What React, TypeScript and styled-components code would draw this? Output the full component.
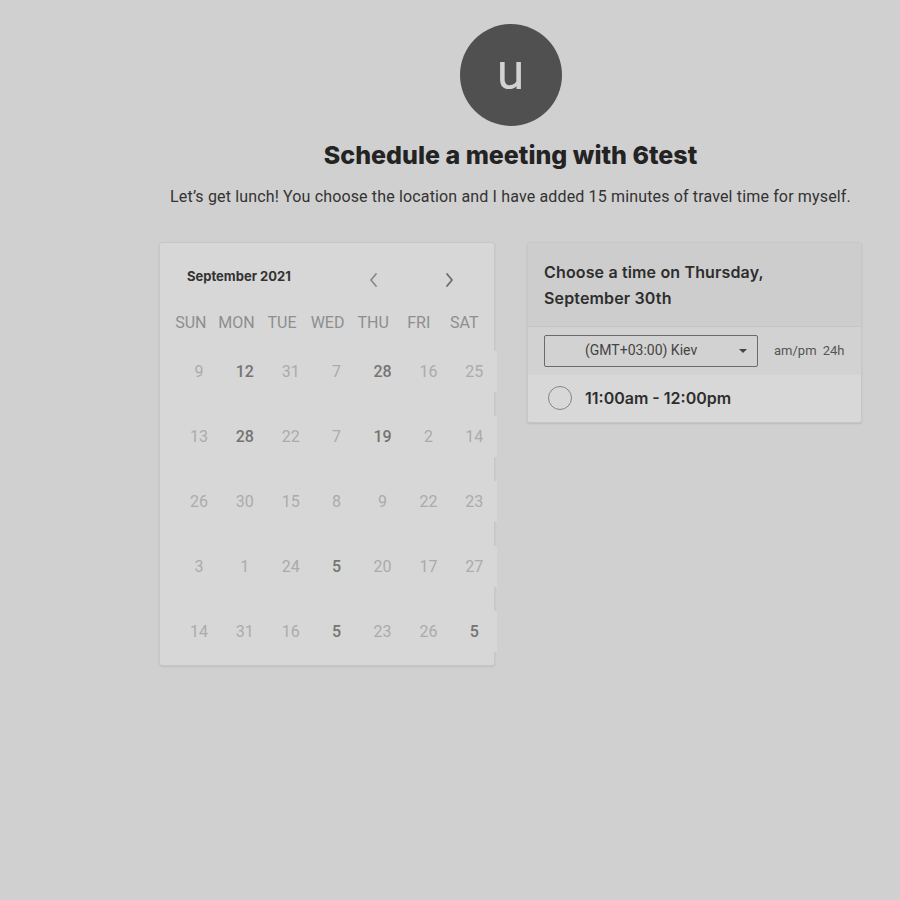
import React from "react";
import styled, { createGlobalStyle } from "styled-components";

const Global = createGlobalStyle`
  html, body { margin: 0; padding: 0; background: #d0d0d0; }
  body { font-family: Roboto, "Liberation Sans", sans-serif; }
  * { box-sizing: border-box; }
`;

const Page = styled.div`
  width: 900px;
  min-height: 900px;
  background: #d0d0d0;
  padding-top: 24px;
`;

const Column = styled.div`
  margin-left: 159px;
  width: 703px;
  display: flex;
  flex-direction: column;
  align-items: center;
`;

const Avatar = styled.div`
  width: 102px;
  height: 102px;
  border-radius: 50%;
  background: #505050;
  color: #d2d2d2;
  display: flex;
  align-items: center;
  justify-content: center;
  font-family: Roboto, "Liberation Sans", sans-serif;
  font-size: 50px;
  line-height: 1;
  padding-bottom: 6px;
`;

const Title = styled.h1`
  margin: 13px 0 0;
  font-family: Inter, "Liberation Sans", sans-serif;
  font-weight: 800;
  font-size: 25px;
  line-height: 32px;
  color: #232323;
  letter-spacing: 0;
`;

const Desc = styled.p`
  margin: 14px 0 0;
  font-family: Roboto, "Liberation Sans", sans-serif;
  font-size: 16px;
  line-height: 24px;
  color: #333;
  letter-spacing: 0.15px;
`;

const Cards = styled.div`
  margin-top: 33px;
  width: 100%;
  display: flex;
  gap: 32px;
  align-items: flex-start;
`;

const CalendarCard = styled.div`
  width: 336px;
  height: 424px;
  background: #d7d7d7;
  border: 1px solid #c6c6c6;
  border-radius: 3px;
  box-shadow: 0 1px 2px rgba(0, 0, 0, 0.08);
  padding: 15px 0 0;
`;

const CalHeader = styled.div`
  display: flex;
  align-items: center;
  height: 36px;
  padding-left: 27px;
`;

const Month = styled.div`
  flex: 0 0 179px;
  font-family: Inter, "Liberation Sans", sans-serif;
  font-weight: 700;
  font-size: 13px;
  color: #333;
`;

const NavBtn = styled.button<{ $gap: number }>`
  flex: 0 0 16px;
  height: 30px;
  border: none;
  background: transparent;
  padding: 0;
  margin-left: ${(p) => p.$gap}px;
  display: flex;
  align-items: center;
  justify-content: center;
  margin-top: 8px;
`;

const DayHeads = styled.div`
  display: grid;
  grid-template-columns: repeat(7, 45.6px);
  margin-top: 16px;
  margin-left: 8px;
  height: 24px;
  align-items: center;
`;

const DayHead = styled.div`
  text-align: center;
  font-family: Roboto, "Liberation Sans", sans-serif;
  font-size: 16px;
  color: #8e8e8e;
`;

const DateGrid = styled.div`
  display: grid;
  grid-template-columns: repeat(7, 45.9px);
  grid-auto-rows: 41px;
  row-gap: 24px;
  margin-top: 17px;
  margin-left: 16px;
`;

const DateCell = styled.div<{ $strong: boolean }>`
  display: flex;
  align-items: center;
  justify-content: center;
  background: #d7d7d7;
  font-family: Roboto, "Liberation Sans", sans-serif;
  font-size: 16px;
  font-weight: ${(p) => (p.$strong ? 500 : 400)};
  color: ${(p) => (p.$strong ? "#747474" : "#ababab")};
`;

const TimeCard = styled.div`
  width: 336px;
  background: #d8d8d8;
  border: 1px solid #c6c6c6;
  border-radius: 3px;
  box-shadow: 0 1px 2px rgba(0, 0, 0, 0.1);
  overflow: hidden;
`;

const TimeHeader = styled.div`
  background: #cdcdcd;
  padding: 16px 16px 15px;
  font-family: Inter, "Liberation Sans", sans-serif;
  font-weight: 600;
  font-size: 16px;
  line-height: 26px;
  color: #2e2e2e;
  letter-spacing: 0.15px;
  border-bottom: 1px solid #c4c4c4;
`;

const ZoneRow = styled.div`
  background: #d2d2d2;
  height: 48px;
  display: flex;
  align-items: center;
  padding: 0 16px;
  gap: 16px;
`;

const Select = styled.div`
  width: 214px;
  height: 32px;
  border: 1px solid #6a6a6a;
  border-radius: 2px;
  display: flex;
  align-items: center;
  position: relative;
  padding-left: 40px;
  padding-bottom: 2px;
  font-family: Roboto, "Liberation Sans", sans-serif;
  font-size: 14px;
  color: #444;
`;

const Caret = styled.span`
  position: absolute;
  right: 10px;
  top: 13px;
  width: 0;
  height: 0;
  border-left: 4px solid transparent;
  border-right: 4px solid transparent;
  border-top: 4px solid #444;
`;

const Formats = styled.div`
  font-family: Roboto, "Liberation Sans", sans-serif;
  font-size: 13px;
  color: #555;
  word-spacing: 3px;
  padding-bottom: 2px;
`;

const Slot = styled.div`
  height: 47px;
  display: flex;
  align-items: center;
  padding-left: 20px;
  padding-bottom: 2px;
  gap: 13px;
  background: #d8d8d8;
`;

const Radio = styled.span`
  width: 24px;
  height: 24px;
  border-radius: 50%;
  border: 1.5px solid #858585;
`;

const SlotText = styled.span`
  font-family: Inter, "Liberation Sans", sans-serif;
  font-weight: 600;
  font-size: 16px;
  color: #2e2e2e;
`;

const days = ["SUN", "MON", "TUE", "WED", "THU", "FRI", "SAT"];
const dates: [string, boolean][][] = [
  [["9", false], ["12", true], ["31", false], ["7", false], ["28", true], ["16", false], ["25", false]],
  [["13", false], ["28", true], ["22", false], ["7", false], ["19", true], ["2", false], ["14", false]],
  [["26", false], ["30", false], ["15", false], ["8", false], ["9", false], ["22", false], ["23", false]],
  [["3", false], ["1", false], ["24", false], ["5", true], ["20", false], ["17", false], ["27", false]],
  [["14", false], ["31", false], ["16", false], ["5", true], ["23", false], ["26", false], ["5", true]],
];

const Chevron = ({ dir }: { dir: "l" | "r" }) => (
  <svg width="10" height="16" viewBox="0 0 10 16">
    <polyline
      points={dir === "l" ? "7,2 2,8 7,14" : "3,2 8,8 3,14"}
      fill="none"
      stroke={dir === "l" ? "#8a8a8a" : "#6a6a6a"}
      strokeWidth="1.8"
      strokeLinecap="round"
      strokeLinejoin="round"
    />
  </svg>
);

export default function App() {
  return (
    <Page>
      <Global />
      <Column>
        <Avatar>u</Avatar>
        <Title>Schedule a meeting with 6test</Title>
        <Desc>
          Let’s get lunch! You choose the location and I have added 15 minutes of travel time for myself.
        </Desc>
        <Cards>
          <CalendarCard>
            <CalHeader>
              <Month>September 2021</Month>
              <NavBtn $gap={0}>
                <Chevron dir="l" />
              </NavBtn>
              <NavBtn $gap={59}>
                <Chevron dir="r" />
              </NavBtn>
            </CalHeader>
            <DayHeads>
              {days.map((d) => (
                <DayHead key={d}>{d}</DayHead>
              ))}
            </DayHeads>
            <DateGrid>
              {dates.flat().map(([n, s], i) => (
                <DateCell key={i} $strong={s}>
                  {n}
                </DateCell>
              ))}
            </DateGrid>
          </CalendarCard>
          <TimeCard>
            <TimeHeader>
              Choose a time on Thursday,
              <br />
              September 30th
            </TimeHeader>
            <ZoneRow>
              <Select>
                (GMT+03:00) Kiev
                <Caret />
              </Select>
              <Formats>am/pm 24h</Formats>
            </ZoneRow>
            <Slot>
              <Radio />
              <SlotText>11:00am - 12:00pm</SlotText>
            </Slot>
          </TimeCard>
        </Cards>
      </Column>
    </Page>
  );
}
